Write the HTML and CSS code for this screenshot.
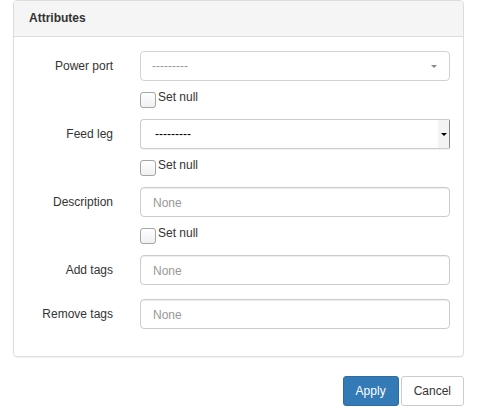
FILE: index.html
```html
<!DOCTYPE html>
<html>
<head>
<meta charset="utf-8">
<link rel="stylesheet" href="styles.css">
</head>
<body>
<div class="panel">
  <div class="panel-heading">Attributes</div>
  <div class="panel-body">
    <div class="form-group group-null">
      <label class="control-label">Power port</label>
      <div class="controls">
        <div class="select2">
          <span class="placeholder">---------</span>
          <span class="s2-caret"></span>
        </div>
        <div class="null-row"><span class="checkbox"></span><span class="null-text">Set null</span></div>
      </div>
    </div>
    <div class="form-group group-null">
      <label class="control-label">Feed leg</label>
      <div class="controls">
        <div class="native-select">
          <span class="value">---------</span>
          <span class="ns-button"><span class="ns-caret"></span></span>
        </div>
        <div class="null-row"><span class="checkbox"></span><span class="null-text">Set null</span></div>
      </div>
    </div>
    <div class="form-group group-null">
      <label class="control-label">Description</label>
      <div class="controls">
        <input class="form-control" type="text" placeholder="None">
        <div class="null-row"><span class="checkbox"></span><span class="null-text">Set null</span></div>
      </div>
    </div>
    <div class="form-group">
      <label class="control-label">Add tags</label>
      <div class="controls">
        <input class="form-control" type="text" placeholder="None">
      </div>
    </div>
    <div class="form-group last">
      <label class="control-label">Remove tags</label>
      <div class="controls">
        <input class="form-control" type="text" placeholder="None">
      </div>
    </div>
  </div>
</div>
<div class="actions">
  <button class="btn btn-primary">Apply</button>
  <button class="btn btn-default">Cancel</button>
</div>
</body>
</html>
```
FILE: styles.css
```css
html, body {
  margin: 0;
  padding: 0;
  background: #fff;
}
body {
  font-family: "Liberation Sans", Arial, sans-serif;
  font-size: 12px;
  color: #333;
}
.panel {
  margin: 0 13px;
  border: 1px solid #ddd;
  border-radius: 4px;
  box-shadow: 0 1px 1px rgba(0,0,0,0.05);
}
.panel-heading {
  background: #f5f5f5;
  border-bottom: 1px solid #ddd;
  border-radius: 3px 3px 0 0;
  padding: 10px 15px 10px 15px;
  line-height: 15px;
  font-weight: bold;
}
.panel-body {
  padding: 14px 13px 27px 0;
}
.form-group {
  display: grid;
  grid-template-columns: 99px 1fr;
  column-gap: 27px;
  margin-bottom: 14px;
}
.form-group.group-null {
  margin-bottom: 11px;
}
.form-group.last {
  margin-bottom: 0;
}
.control-label {
  text-align: right;
  line-height: 31px;
  height: 30px;
}
.controls {
  display: flex;
  flex-direction: column;
}
.form-control {
  box-sizing: border-box;
  width: 100%;
  height: 30px;
  margin: 0;
  padding: 1px 12px 0;
  font-family: inherit;
  font-size: 12px;
  color: #555;
  border: 1px solid #ccc;
  border-radius: 4px;
  box-shadow: inset 0 1px 1px rgba(0,0,0,0.075);
  background: #fff;
  outline: none;
}
.form-control::placeholder {
  color: #999;
  opacity: 1;
}
.select2 {
  box-sizing: border-box;
  height: 30px;
  border: 1px solid #d2d2d2;
  border-radius: 4px;
  display: flex;
  align-items: center;
  padding: 0 12px 0 11px;
  background: #fff;
}
.placeholder {
  flex: 1;
  color: #999;
  line-height: 28px;
}
.s2-caret {
  width: 0;
  height: 0;
  border-left: 3px solid transparent;
  border-right: 3px solid transparent;
  border-top: 3px solid #888;
  margin-right: 0;
}
.native-select {
  box-sizing: border-box;
  height: 30px;
  border: 1px solid #ccc;
  border-right: 1px solid #888;
  border-radius: 4px 2px 2px 4px;
  display: flex;
  align-items: stretch;
  background: #fff;
  box-shadow: 0 1px 1px rgba(0,0,0,0.06);
}
.native-select .value {
  flex: 1;
  padding-left: 14px;
  line-height: 28px;
  color: #000;
}
.ns-button {
  width: 11px;
  background: #f3f3f3;
  display: flex;
  align-items: center;
  justify-content: center;
}
.ns-caret {
  width: 0;
  height: 0;
  border-left: 3px solid transparent;
  border-right: 3px solid transparent;
  border-top: 3px solid #000;
  margin-top: 1px;
}
.null-row {
  display: flex;
  align-items: flex-start;
  margin-top: 11px;
  height: 16px;
}
.checkbox {
  box-sizing: border-box;
  width: 16px;
  height: 16px;
  border: 1px solid #a5a5a5;
  border-radius: 3px;
  background: linear-gradient(#fff, #f0f0f0);
}
.null-text {
  margin-left: 2px;
  margin-top: -1px;
  line-height: 12px;
  color: #333;
}
.actions {
  display: flex;
  justify-content: flex-end;
  gap: 2px;
  margin: 19px 13px 0;
}
.btn {
  box-sizing: border-box;
  height: 30px;
  padding: 0 12px;
  font-family: inherit;
  font-size: 12px;
  line-height: 28px;
  border: 1px solid transparent;
  border-radius: 3px;
  cursor: pointer;
}
.btn-primary {
  background: #337ab7;
  border-color: #2e6da4;
  color: #fff;
}
.btn-default {
  background: #fff;
  border-color: #ccc;
  color: #333;
}
```
